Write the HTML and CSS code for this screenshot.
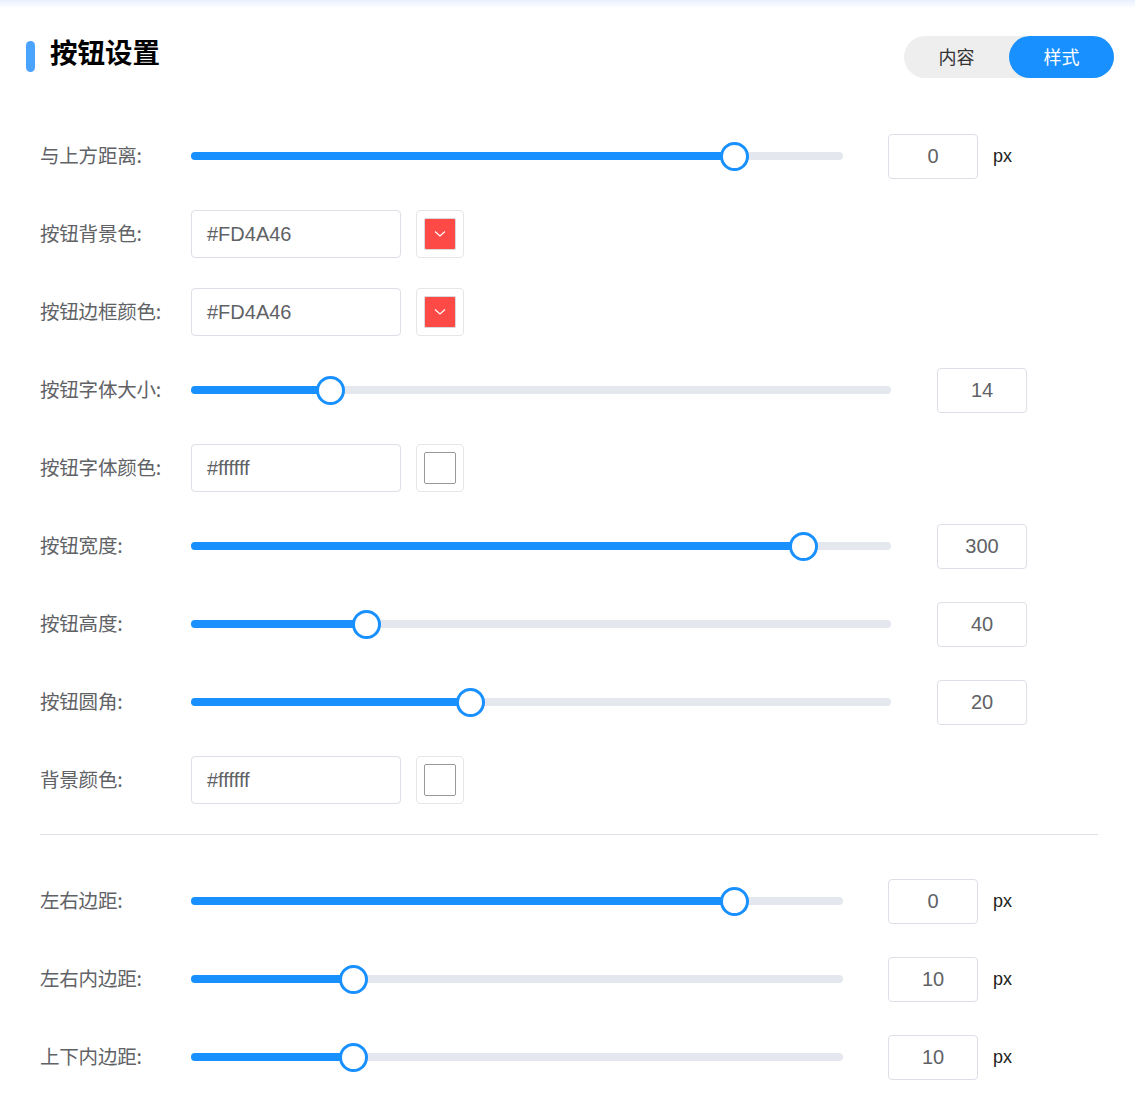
FILE: index.html
```html
<!DOCTYPE html>
<html lang="zh">
<head>
<meta charset="utf-8">
<link rel="stylesheet" href="styles.css">
</head>
<body>
<div class="topband"></div>
<div class="panel">
  <div class="header">
    <div class="title"><span class="bar"></span><h1>按钮设置</h1></div>
    <div class="tabs"><span class="tab">内容</span><span class="tab active">样式</span></div>
  </div>

  <div class="row">
    <label>与上方距离:</label>
    <div class="slider short"><div class="track"><div class="fill" style="width:543px"></div><span class="thumb" style="left:543px"></span></div></div>
    <div class="num">0</div><span class="unit">px</span>
  </div>
  <div class="row">
    <label>按钮背景色:</label>
    <div class="text">#FD4A46</div>
    <div class="picker"><span class="swatch red"><svg viewBox="0 0 12 8" width="12" height="8"><path d="M1 1.5 L6 6 L11 1.5" fill="none" stroke="#fff" stroke-width="1.2"/></svg></span></div>
  </div>
  <div class="row">
    <label>按钮边框颜色:</label>
    <div class="text">#FD4A46</div>
    <div class="picker"><span class="swatch red"><svg viewBox="0 0 12 8" width="12" height="8"><path d="M1 1.5 L6 6 L11 1.5" fill="none" stroke="#fff" stroke-width="1.2"/></svg></span></div>
  </div>
  <div class="row">
    <label>按钮字体大小:</label>
    <div class="slider long"><div class="track"><div class="fill" style="width:139px"></div><span class="thumb" style="left:139px"></span></div></div>
    <div class="num">14</div>
  </div>
  <div class="row">
    <label>按钮字体颜色:</label>
    <div class="text">#ffffff</div>
    <div class="picker"><span class="swatch white"></span></div>
  </div>
  <div class="row">
    <label>按钮宽度:</label>
    <div class="slider long"><div class="track"><div class="fill" style="width:612px"></div><span class="thumb" style="left:612px"></span></div></div>
    <div class="num">300</div>
  </div>
  <div class="row">
    <label>按钮高度:</label>
    <div class="slider long"><div class="track"><div class="fill" style="width:175px"></div><span class="thumb" style="left:175px"></span></div></div>
    <div class="num">40</div>
  </div>
  <div class="row">
    <label>按钮圆角:</label>
    <div class="slider long"><div class="track"><div class="fill" style="width:279px"></div><span class="thumb" style="left:279px"></span></div></div>
    <div class="num">20</div>
  </div>
  <div class="row">
    <label>背景颜色:</label>
    <div class="text">#ffffff</div>
    <div class="picker"><span class="swatch white"></span></div>
  </div>

  <div class="divider"></div>

  <div class="row">
    <label>左右边距:</label>
    <div class="slider short"><div class="track"><div class="fill" style="width:543px"></div><span class="thumb" style="left:543px"></span></div></div>
    <div class="num">0</div><span class="unit">px</span>
  </div>
  <div class="row">
    <label>左右内边距:</label>
    <div class="slider short"><div class="track"><div class="fill" style="width:162px"></div><span class="thumb" style="left:162px"></span></div></div>
    <div class="num">10</div><span class="unit">px</span>
  </div>
  <div class="row">
    <label>上下内边距:</label>
    <div class="slider short"><div class="track"><div class="fill" style="width:162px"></div><span class="thumb" style="left:162px"></span></div></div>
    <div class="num">10</div><span class="unit">px</span>
  </div>
</div>
</body>
</html>
```

FILE: styles.css
```css
* { box-sizing: border-box; }
html, body { margin: 0; padding: 0; background: #fff; }
body { font-family: "Noto Sans CJK SC", "Noto Sans", sans-serif; color: #606266; }

.topband { height: 8px; background: linear-gradient(#eaf1fe, #f6f9ff 70%, #fff); }

.panel { padding: 0 21px 0 26px; }

.header { display: flex; justify-content: space-between; align-items: flex-start; height: 124px; }
.title { display: flex; align-items: center; margin-top: 33px; }
.bar { width: 9px; height: 31px; border-radius: 5px; background: #4aa3ff; margin-right: 15px; }
.title h1 { margin: -10px 0 0 0; font-size: 27.5px; font-weight: 700; color: #000; line-height: 31px; }

.tabs { margin-top: 28px; display: flex; width: 210px; height: 42px; border-radius: 21px; background: #eeeeee; }
.tab { flex: 1; display: flex; align-items: center; justify-content: center; font-size: 18px; color: #333; border-radius: 21px; padding-bottom: 2px; }
.tab.active { background: #1890ff; color: #fff; }

.row { display: flex; align-items: center; height: 48px; margin-bottom: 30px; padding-left: 14px; }
.row label { width: 151px; flex: none; font-size: 19.5px; color: #606266; letter-spacing: -0.2px; padding-bottom: 3px; }

.slider { flex: none; height: 30px; display: flex; align-items: center; margin-right: 45px; }
.slider.short { width: 652px; }
.slider.long { width: 700px; margin-right: 46px; }
.track { position: relative; width: 100%; height: 8px; border-radius: 4px; background: #e4e7ed; }
.fill { height: 8px; border-radius: 4px; background: #1890ff; }
.thumb { position: absolute; top: 50%; width: 29px; height: 29px; margin: -14.5px 0 0 -14.5px; border-radius: 50%; background: #fff; border: 3px solid #1890ff; }

.num { width: 90px; height: 45px; border: 1px solid #dcdfe6; border-radius: 4px; display: flex; align-items: center; justify-content: center; font-family: "Liberation Sans", Arial, sans-serif; font-size: 20px; color: #606266; }
.unit { margin-left: 15px; font-family: "Liberation Sans", Arial, sans-serif; font-size: 18px; color: #222; }

.text { width: 210px; height: 48px; border: 1px solid #dcdfe6; border-radius: 4px; display: flex; align-items: center; padding-left: 15px; font-family: "Liberation Sans", Arial, sans-serif; font-size: 20px; color: #606266; }
.picker { margin-left: 15px; width: 48px; height: 48px; border: 1px solid #e6e6e6; border-radius: 4px; display: flex; align-items: center; justify-content: center; }
.swatch { width: 32px; height: 32px; border: 1px solid #999; border-radius: 2px; display: flex; align-items: center; justify-content: center; }
.swatch.red { background: #fd4a46; border-color: #d9d9d9; }
.swatch.white { background: #fff; }

.divider { height: 1px; background: #dcdfe6; margin: 0 16px 42px 14px; }
```
